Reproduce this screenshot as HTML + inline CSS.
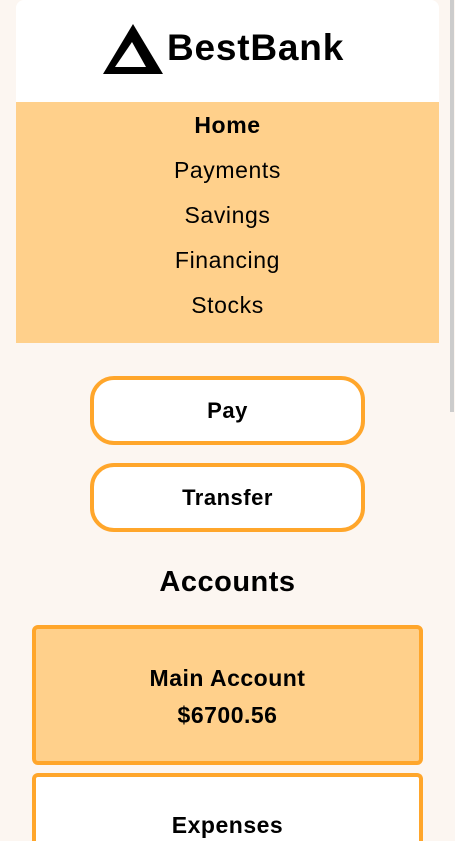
<!DOCTYPE html>
<html style="height:841px;overflow:hidden"><head><style>
body{margin:0;background:#FCF6F1;font-family:"Liberation Sans",sans-serif;width:455px;height:841px;overflow:hidden;position:relative;color:#000}
.card{position:absolute;left:16px;top:0;width:423px;height:102px;background:#fff;border-radius:8px 8px 0 0}
.logo{position:absolute;left:103px;top:24px}
.brand{position:absolute;left:167px;top:27px;font-size:37px;font-weight:bold;letter-spacing:0.8px}
.nav{position:absolute;left:16px;top:102px;width:423px;height:241px;background:#FFD08B}
.nav div{position:absolute;left:0;width:100%;text-align:center;font-size:23px;letter-spacing:0.6px}
.btn{position:absolute;left:90px;width:267px;height:61px;border:4px solid #FFA62B;border-radius:24px;background:#fff;text-align:center;line-height:61px;font-weight:bold;font-size:22px;letter-spacing:0.5px}
.acc{position:absolute;left:32px;width:383px;border:4px solid #FFA62B;border-radius:6px;text-align:center;font-weight:bold;font-size:23px;letter-spacing:0.5px;overflow:hidden}
.sb{position:absolute;left:450px;top:0;width:4px;height:412px;background:#ccc}
</style></head><body>
<div class="card"></div>
<svg class="logo" width="60" height="50" viewBox="0 0 60 50"><polygon points="30,0 60,50 0,50" fill="#000"/><polygon points="29,18 43,43 12,43" fill="#fff"/></svg>
<div class="brand">BestBank</div>
<div class="nav">
<div style="top:10px;font-weight:bold">Home</div>
<div style="top:55px">Payments</div>
<div style="top:100px">Savings</div>
<div style="top:145px">Financing</div>
<div style="top:190px">Stocks</div>
</div>
<div class="btn" style="top:376px">Pay</div>
<div class="btn" style="top:463px">Transfer</div>
<div style="position:absolute;top:566px;width:455px;text-align:center;font-size:29px;font-weight:bold;letter-spacing:0.5px">Accounts</div>
<div class="acc" style="top:625px;height:132px;background:#FFD08B"><div style="margin-top:36px">Main Account</div><div style="margin-top:10px">$6700.56</div></div>
<div class="acc" style="top:773px;height:64px;background:#fff;border-bottom:none;border-radius:6px 6px 0 0"><div style="margin-top:35px">Expenses</div></div>
<div class="sb"></div>
</body></html>
